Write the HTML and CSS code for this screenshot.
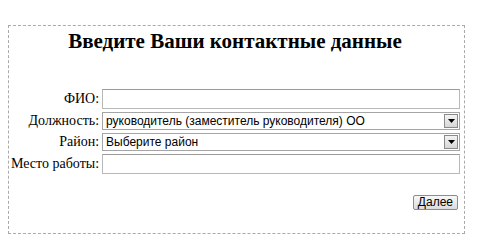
FILE: index.html
```html
<!DOCTYPE html>
<html>
<head>
    <title>Контактные данные</title>
    <link rel="stylesheet" href="styles.css">
</head>
<body>
    <div class="box">
        <h1>Введите Ваши контактные данные</h1>
        <div class="form">
            <label class="label">ФИО:</label>
            <input class="field" type="text">

            <label class="label">Должность:</label>
            <div class="select">
                <span class="select-text">руководитель (заместитель руководителя) ОО</span>
                <span class="arrow"><svg width="7" height="4" viewBox="0 0 7 4"><path d="M0 0h7L3.5 4z" fill="#000"/></svg></span>
            </div>

            <label class="label">Район:</label>
            <div class="select">
                <span class="select-text">Выберите район</span>
                <span class="arrow"><svg width="7" height="4" viewBox="0 0 7 4"><path d="M0 0h7L3.5 4z" fill="#000"/></svg></span>
            </div>

            <label class="label">Место работы:</label>
            <input class="field" type="text">
        </div>
        <div class="actions">
            <button class="next">Далее</button>
        </div>
    </div>
</body>
</html>
```

FILE: styles.css
```css
body {
    margin: 25px 8px 8px 8px;
    font-family: "Liberation Serif", "Times New Roman", serif;
    color: #000;
    background: #fff;
}

.box {
    width: 457px;
    height: 209px;
    border: 1px dashed #aaa;
    padding: 0 4px 0 1px;
    box-sizing: border-box;
}

h1 {
    margin: 3px 0 0 0;
    font-size: 21px;
    line-height: 24px;
    text-align: center;
    font-weight: bold;
}

.form {
    display: grid;
    grid-template-columns: auto 1fr;
    column-gap: 3px;
    row-gap: 3px;
    margin-top: 36px;
    align-items: center;
}

.label {
    font-size: 14px;
    text-align: right;
    padding-left: 1px;
}

.field {
    height: 20px;
    margin: 0;
    border: 1px solid #b8b8b8;
    border-top-color: #9a9a9a;
    box-sizing: border-box;
    padding: 0 3px;
    font-family: "Liberation Sans", Arial, sans-serif;
    font-size: 12px;
}

.select {
    height: 18px;
    display: flex;
    align-items: center;
    border: 1px solid #a5a5a5;
    box-sizing: border-box;
    font-family: "Liberation Sans", Arial, sans-serif;
    font-size: 12px;
    padding-left: 3px;
}

.select-text {
    flex: 1;
    white-space: nowrap;
    overflow: hidden;
}

.arrow {
    width: 14px;
    height: 14px;
    margin-right: 1px;
    display: flex;
    align-items: center;
    justify-content: center;
    box-sizing: border-box;
    border: 1px solid #8a8a8a;
    background: linear-gradient(#f4f4f4, #d6d6d6);
}

.actions {
    display: flex;
    justify-content: flex-end;
    margin-top: 21px;
    padding-right: 2px;
}

.next {
    height: 15px;
    padding: 0 4px;
    font-family: "Liberation Sans", Arial, sans-serif;
    font-size: 12px;
    line-height: 13px;
    border: 1px solid #8c8c8c;
    border-radius: 2px;
    background: linear-gradient(#f8f8f8, #dcdcdc);
    color: #000;
}
```
